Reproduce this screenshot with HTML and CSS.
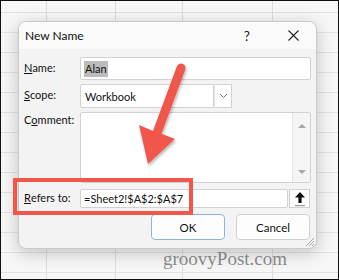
FILE: index.html
```html
<!DOCTYPE html>
<html lang="en">
<head>
  <meta charset="UTF-8" />
  <meta name="viewport" content="width=device-width, initial-scale=1">
  <title>New Name</title>
  <link rel="stylesheet" href="styles.css">
</head>
<body>
  <div class="screen">
    <div class="dialog">
      <div class="titlebar">
        <span class="title">New Name</span>
        <span class="caption-btn help">?</span>
        <span class="caption-btn close">
          <svg width="11" height="11" viewBox="0 0 11 11"><path d="M0.5 0.5 L10.5 10.5 M10.5 0.5 L0.5 10.5" stroke="#222" stroke-width="1.1" fill="none"/></svg>
        </span>
      </div>
      <div class="form">
        <label class="lbl"><u>N</u>ame:</label>
        <div class="field field-name"><span class="selected">Alan</span></div>

        <label class="lbl"><u>S</u>cope:</label>
        <div class="scope">
          <div class="field field-scope">Workbook</div>
          <div class="drop-btn">
            <svg width="9" height="6" viewBox="0 0 9 6"><path d="M1 1 L4.5 4.5 L8 1" stroke="#777" stroke-width="1" fill="none"/></svg>
          </div>
        </div>

        <label class="lbl lbl-top">C<u>o</u>mment:</label>
        <div class="field field-comment">
          <div class="scrollbar">
            <span class="tri tri-up"></span>
            <span class="tri tri-down"></span>
          </div>
        </div>

        <label class="lbl lbl-refers"><u>R</u>efers to:</label>
        <div class="refers">
          <div class="field field-refers">=Sheet2!$A$2:$A$7</div>
          <div class="collapse-btn">
            <svg width="12" height="16" viewBox="0 0 12 16">
              <path d="M6 1 L11 6.5 L7.6 6.5 L7.6 12 L4.4 12 L4.4 6.5 L1 6.5 Z" fill="#111"/>
              <rect x="1" y="14" width="10" height="1.2" fill="#999"/>
            </svg>
          </div>
        </div>

        <div class="actions">
          <button class="btn btn-ok">OK</button>
          <button class="btn">Cancel</button>
        </div>
      </div>
      <svg class="grip" width="10" height="10" viewBox="0 0 10 10">
        <path d="M9 1 L1 9 M9 4 L4 9 M9 7 L7 9" stroke="#aaa" stroke-width="1"/>
      </svg>
    </div>

    <div class="callout"></div>

    <svg class="arrow" width="339" height="280" viewBox="0 0 339 280">
      <defs>
        <filter id="shadow" x="-30%" y="-30%" width="160%" height="160%">
          <feDropShadow dx="1" dy="2" stdDeviation="1.5" flood-color="#000" flood-opacity="0.3"/>
        </filter>
      </defs>
      <g filter="url(#shadow)" fill="#f0564a">
        <path d="M181 68 L157 133" stroke="#f0564a" stroke-width="9" stroke-linecap="round"/>
        <polygon points="148,164 139,125 153,131 162,134 175,139"/>
      </g>
    </svg>

    <div class="watermark">groovyPost.com</div>
  </div>
</body>
</html>
```

FILE: styles.css
```css
/* Excel "New Name" dialog over a sheet */
body {
  margin: 0;
  font-family: Lato, "Noto Sans", sans-serif;
  font-size: 11px;
  color: #111;
}
.screen {
  position: relative;
  box-sizing: border-box;
  width: 339px;
  height: 280px;
  border: 1px solid #111;
  padding: 20px 0 0 17px;
  overflow: hidden;
  background-color: #f7f7f7;
  background-image:
    linear-gradient(to right, transparent 45px, #dedede 45px, #dedede 46px, transparent 46px),
    linear-gradient(to right, transparent 114px, #dedede 114px, #dedede 115px, transparent 115px),
    linear-gradient(to right, transparent 181px, #dedede 181px, #dedede 182px, transparent 182px),
    linear-gradient(to right, transparent 271px, #dedede 271px, #dedede 272px, transparent 272px),
    repeating-linear-gradient(to bottom, transparent 0, transparent 11px, #e2e2e2 11px, #e2e2e2 12px, transparent 12px, transparent 20px);
}
.dialog {
  position: relative;
  box-sizing: border-box;
  width: 299px;
  height: 228px;
  background: #f3f3f3;
  border: 1px solid #c9c9c9;
  border-radius: 8px;
  box-shadow: 0 4px 18px rgba(0, 0, 0, 0.22);
  overflow: hidden;
}
.titlebar {
  display: flex;
  align-items: center;
  height: 27px;
  background: #fafafa;
}
.title {
  flex: 1;
  padding-left: 6px;
  font-size: 12px;
}
.caption-btn {
  width: 46px;
  display: flex;
  justify-content: center;
  align-items: center;
  height: 27px;
}
.help {
  font-size: 13px;
}
.form {
  display: grid;
  grid-template-columns: 56px 1fr;
  grid-template-rows: 23px 24px 71px 21px 26px;
  row-gap: 4px;
  padding: 8px 5px 0 5px;
}
.lbl {
  display: flex;
  align-items: center;
  margin-top: -3px;
}
.lbl-top {
  align-items: flex-start;
  margin-top: 1px;
}
.lbl-refers {
  margin-top: -1px;
}
.field {
  box-sizing: border-box;
  background: #fff;
  border: 1px solid #d2d2d2;
  border-radius: 2px;
  display: flex;
  align-items: center;
  padding-left: 3px;
}
.selected {
  background: #bcbcbc;
  padding: 1px 1px 2px;
}
.scope {
  display: flex;
  width: 152px;
}
.field-scope {
  flex: 1;
  padding-left: 4px;
}
.drop-btn {
  box-sizing: border-box;
  width: 18px;
  background: #fff;
  border: 1px solid #d2d2d2;
  border-left-color: #e0e0e0;
  display: flex;
  align-items: center;
  justify-content: center;
}
.field-comment {
  align-items: stretch;
  justify-content: flex-end;
  padding: 0;
}
.scrollbar {
  width: 17px;
  background: #f5f5f5;
  border-left: 1px solid #e6e6e6;
  display: flex;
  flex-direction: column;
  justify-content: space-between;
  align-items: center;
  padding: 11px 0 8px;
}
.tri {
  width: 0;
  height: 0;
  border-left: 4px solid transparent;
  border-right: 4px solid transparent;
}
.tri-up {
  border-bottom: 4px solid #a8a8a8;
}
.tri-down {
  border-top: 4px solid #a8a8a8;
}
.refers {
  display: flex;
  gap: 1px;
  margin-top: 2px;
  margin-right: 1px;
}
.field-refers {
  flex: 1;
  padding-left: 3px;
}
.collapse-btn {
  box-sizing: border-box;
  width: 21px;
  background: #fff;
  border: 1px solid #d2d2d2;
  display: flex;
  align-items: center;
  justify-content: center;
}
.actions {
  grid-column: 2;
  display: flex;
  justify-content: flex-end;
  gap: 11px;
  margin-top: 2px;
  margin-right: 1px;
}
.btn {
  width: 74px;
  height: 26px;
  background: #fdfdfd;
  border: 1px solid #d0d0d0;
  border-radius: 4px;
  font-family: Lato, "Noto Sans", sans-serif;
  font-size: 11.5px;
  color: #111;
}
.btn-ok {
  border-color: #8ab6de;
}
.grip {
  position: absolute;
  right: 1px;
  bottom: 1px;
}
.callout {
  position: absolute;
  left: 12px;
  top: 177px;
  width: 180px;
  height: 37px;
  box-sizing: border-box;
  border: 4px solid #f0564a;
}
.arrow {
  position: absolute;
  left: -1px;
  top: -1px;
}
.watermark {
  position: absolute;
  left: 162px;
  top: 248px;
  font-family: "Liberation Serif", serif;
  font-size: 19px;
  line-height: 19px;
  color: rgba(100, 100, 100, 0.75);
}
```
